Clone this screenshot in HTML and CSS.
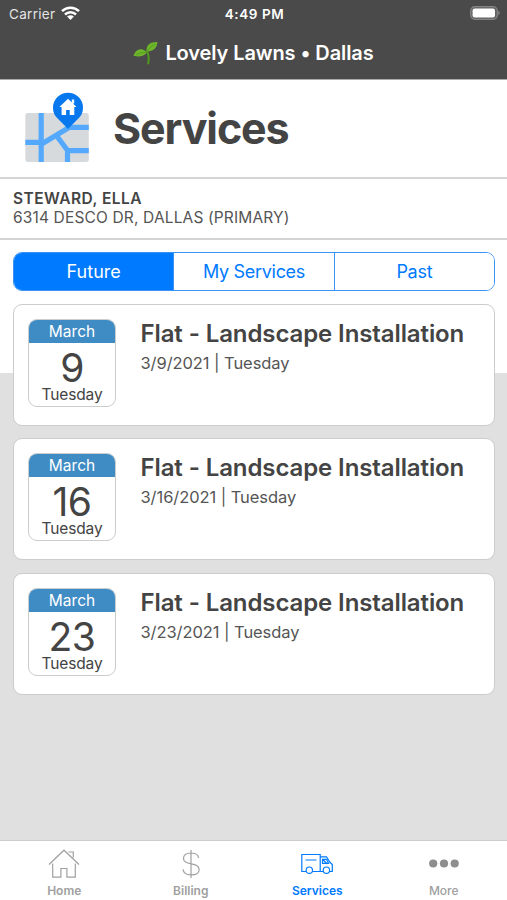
FILE: index.html
```html
<!DOCTYPE html>
<html lang="en">
  <head>
    <meta charset="UTF-8" />
    <meta name="viewport" content="width=device-width, initial-scale=1.0" />
    <title>Lovely Lawns - Services</title>
    <link rel="stylesheet" href="styles.css">
  </head>
  <body>
    <header class="app-header">
      <div class="status-bar">
        <div class="carrier">
          <span class="carrier-name">Carrier</span>
          <svg class="wifi" width="19" height="15" viewBox="0 0 19 15">
            <g fill="none" stroke="#fff" stroke-width="2.5">
              <path d="M1 5.2a12.2 12.2 0 0 1 17 0" />
              <path d="M4 8.5a7.9 7.9 0 0 1 11 0" />
            </g>
            <path d="M9.5 14 6.1 10.6a4.9 4.9 0 0 1 6.8 0z" fill="#fff" />
          </svg>
        </div>
        <span class="clock">4:49 PM</span>
        <svg class="battery" width="30" height="14" viewBox="0 0 30 14">
          <rect x=".7" y=".7" width="26.6" height="12.6" rx="4" fill="#626262" stroke="#858585" stroke-width="1.2" />
          <rect x="2.6" y="2.6" width="22.4" height="8.8" rx="2" fill="#fff" />
          <path d="M28.3 4.8c2 .8 2 3.6 0 4.4z" fill="#858585" />
        </svg>
      </div>
      <div class="company">
        <svg width="25" height="24" viewBox="0 0 25 24">
          <path d="M14.3 11c1.4 3 1.8 7 .9 11.5" fill="none" stroke="#4f9a1d" stroke-width="2" stroke-linecap="round" />
          <path d="M13.5 10.5C13 4 17 .8 24.5 1c-.5 6-4.5 9.8-11 9.5z" fill="#6fb52c" />
          <path d="M13.8 11.5C10 6.5 3 7 .5 14.8c5.5 1.6 10.5.7 13.3-3.3z" fill="#6fb52c" />
          <path d="M14 10.3c2.3-3.4 5-5.7 8-7.2M13.5 11.3c-4 0-7 .8-10.5 2.5" fill="none" stroke="#4f9a1d" stroke-width=".8" />
        </svg>
        <span class="company-name">Lovely Lawns • Dallas</span>
      </div>
    </header>

    <section class="page-title">
      <svg width="64" height="70" viewBox="0 0 64 70">
        <rect x=".3" y="21" width="63.5" height="49" rx="2.5" fill="#d7dadc" />
        <g fill="none" stroke="#55a9fc" stroke-width="5.2">
          <path d="M16.2 21v49M.3 50.3h15M42 35.3h21.8" />
          <path d="M15 53 44 35.5" />
          <path d="M31 43 42.8 58.7h21M42.5 58v12" />
        </g>
        <path d="M43 37 32.4 26.3a15 15 0 1 1 21.2 0z" fill="#0878ee" />
        <path d="m43 6.8 8.5 8.3h-2.2v8h-4.6v-5h-3.6v5h-4.5v-8h-2.2zM46.8 7.5h2.4v4h-2.4z" fill="#fff" />
      </svg>
      <h1>Services</h1>
    </section>

    <section class="account">
      <div class="account-name">STEWARD, ELLA</div>
      <div class="account-address">6314 DESCO DR, DALLAS (PRIMARY)</div>
    </section>

    <main class="content">
      <div class="segments">
        <button class="segment active">Future</button>
        <button class="segment">My Services</button>
        <button class="segment">Past</button>
      </div>

      <div class="card">
        <div class="calendar">
          <div class="month">March</div>
          <div class="day">9</div>
          <div class="weekday">Tuesday</div>
        </div>
        <div class="details">
          <h2>Flat - Landscape Installation</h2>
          <p>3/9/2021 | Tuesday</p>
        </div>
      </div>

      <div class="card">
        <div class="calendar">
          <div class="month">March</div>
          <div class="day">16</div>
          <div class="weekday">Tuesday</div>
        </div>
        <div class="details">
          <h2>Flat - Landscape Installation</h2>
          <p>3/16/2021 | Tuesday</p>
        </div>
      </div>

      <div class="card">
        <div class="calendar">
          <div class="month">March</div>
          <div class="day">23</div>
          <div class="weekday">Tuesday</div>
        </div>
        <div class="details">
          <h2>Flat - Landscape Installation</h2>
          <p>3/23/2021 | Tuesday</p>
        </div>
      </div>
    </main>

    <nav class="tab-bar">
      <a class="tab">
        <svg width="32" height="30" viewBox="0 0 32 30">
          <path d="M1 15.5 16 1.2l15 14.3M4.7 14.5v13.7h8.2v-8.7h6v8.7h8.4V14.5M20.5 3h4.8v5.5" />
        </svg>
        <span>Home</span>
      </a>
      <a class="tab">
        <svg width="32" height="30" viewBox="0 0 32 30">
          <path d="M16 1v28M23.6 9c-.4-3.2-3-5-7.5-5-4.7 0-7.6 2-7.6 5.4 0 7.7 15.6 3.2 15.6 11 0 3.6-3.2 5.5-8 5.5-4.9 0-7.8-2-8.1-5.6" />
        </svg>
        <span>Billing</span>
      </a>
      <a class="tab active">
        <svg width="32" height="30" viewBox="0 0 32 30">
          <path d="M5 22.5H.8V5.5h18.4v17h-7.7M19.2 7.800h6.300l3.400 5.500 2.400 2.200v7h-2.700M19.200 22.500h3M4.500 11h11M21.500 10.300v4h6l-2-4zM21.800 10.500l3.500 3.500" />
          <circle cx="8.3" cy="21.2" r="3.2" />
          <circle cx="25.4" cy="21.2" r="3.2" />
        </svg>
        <span>Services</span>
      </a>
      <a class="tab more">
        <svg class="dots" width="32" height="30" viewBox="0 0 32 30">
          <circle cx="5.2" cy="14.5" r="4.1" />
          <circle cx="16" cy="14.5" r="4.1" />
          <circle cx="26.7" cy="14.5" r="4.1" />
        </svg>
        <span>More</span>
      </a>
    </nav>
  </body>
</html>
```

FILE: styles.css
```css
:root {
  --blue: #007aff;
  --dark: #4a4a4a;
  --text: #444;
  --text-light: #555;
  --line: #d4d4d4;
  --gray: #e0e0e0;
}

* {
  box-sizing: border-box;
}

body {
  margin: 0;
  height: 900px;
  display: flex;
  flex-direction: column;
  overflow: hidden;
  font-family: "Inter", "Liberation Sans", sans-serif;
  color: var(--text);
  background: #fff;
}

svg {
  display: block;
  flex: none;
}

.app-header {
  height: 80px;
  background: var(--dark);
  border-bottom: 1px solid #aaa;
  color: #fff;
}

.status-bar {
  height: 28px;
  padding: 0 7px 0 9px;
  display: grid;
  grid-template-columns: 1fr auto 1fr;
  align-items: center;
  font-size: 13.5px;
}

.carrier {
  display: flex;
  align-items: center;
  gap: 6px;
}

.carrier-name {
  color: #e4e4e4;
  letter-spacing: 0.3px;
}

.wifi {
  margin-top: -2px;
}

.clock {
  font-weight: 600;
  letter-spacing: 0.6px;
}

.battery {
  justify-self: end;
  margin-top: -2px;
}

.company {
  height: 49px;
  display: flex;
  justify-content: center;
  align-items: center;
  gap: 7px;
}

.company-name {
  font-size: 20px;
  font-weight: 600;
  letter-spacing: -0.1px;
}

.page-title {
  height: 99px;
  padding: 12px 25px 0;
  display: flex;
  gap: 24px;
  border-bottom: 2px solid var(--line);
}

h1 {
  margin: 6px 0 0;
  font-size: 43px;
  line-height: 60px;
  font-weight: 700;
  letter-spacing: -1.1px;
}

.account {
  height: 61px;
  padding: 10px 13px 0;
  font-size: 15.5px;
  line-height: 19px;
  border-bottom: 2px solid var(--line);
}

.account-name {
  font-weight: 600;
  letter-spacing: 0.45px;
}

.account-address {
  color: var(--text-light);
  letter-spacing: 0.15px;
}

.account-name,
.account-address {
  width: max-content;
}

.content {
  flex: 1;
  padding: 12px 12px 0 13px;
  background: linear-gradient(#fff 133px, var(--gray) 133px);
}

.segments {
  height: 39px;
  margin-bottom: 13px;
  display: flex;
  border: 1.5px solid #3993f7;
  border-radius: 9px;
  overflow: hidden;
}

.segment {
  flex: 1;
  border: none;
  padding: 0;
  background: #fff;
  color: var(--blue);
  font-family: inherit;
  font-size: 18px;
  letter-spacing: -0.3px;
}

.segment + .segment {
  border-left: 1.5px solid #3993f7;
}

.segment.active {
  background: var(--blue);
  color: #fff;
  letter-spacing: 0;
}

.card {
  height: 122px;
  margin-bottom: 12.4px;
  padding: 14px;
  display: flex;
  gap: 24.5px;
  background: #fff;
  border: 1.5px solid #ccc;
  border-radius: 9px;
}

.calendar {
  width: 88px;
  height: 88px;
  border: 1.5px solid #ccc;
  border-radius: 9px;
  overflow: hidden;
  text-align: center;
}

.month {
  height: 23px;
  background: #3f8cc5;
  color: #fff;
  font-size: 15.5px;
  line-height: 23px;
}

.day {
  height: 42px;
  font-size: 39px;
  line-height: 50px;
  font-weight: 400;
  letter-spacing: -0.5px;
}

.weekday {
  font-size: 15.5px;
  line-height: 19px;
  letter-spacing: -0.1px;
}

.details h2 {
  margin: 0;
  font-size: 24px;
  line-height: 29px;
  font-weight: 600;
  letter-spacing: -0.1px;
  white-space: nowrap;
}

.details p {
  margin: 4px 0 0;
  font-size: 16.5px;
  line-height: 22px;
  letter-spacing: -0.07px;
  color: var(--text-light);
  width: max-content;
}

.tab-bar {
  height: 60px;
  padding-left: 1px;
  display: flex;
  border-top: 1px solid #ccc;
  background: #fff;
}

.tab {
  flex: 1;
  padding-top: 8px;
  display: flex;
  flex-direction: column;
  align-items: center;
  gap: 4px;
  color: #a0a0a0;
  font-size: 12px;
  line-height: 16px;
  font-weight: 600;
}

.tab svg {
  fill: none;
  stroke: currentColor;
  stroke-width: 1.2;
}

.tab .dots {
  fill: #8e8e8e;
  stroke: none;
}

.tab.active {
  color: var(--blue);
}

.tab.more {
  font-weight: 500;
}
```
